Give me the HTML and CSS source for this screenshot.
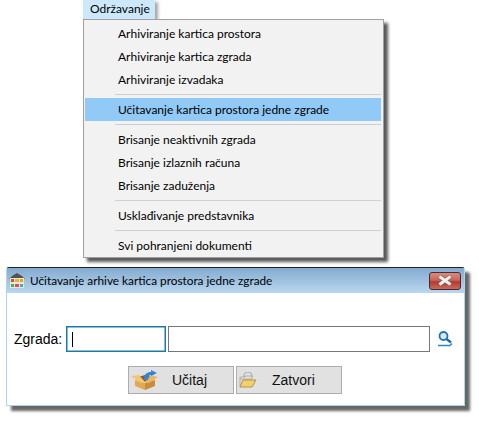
FILE: index.html
```html
<!DOCTYPE html>
<html lang="en">
<head>
    <meta charset="UTF-8">
    <meta name="viewport" content="width=device-width, initial-scale=1.0">
    <title>Učitavanje arhive</title>
    <link rel="stylesheet" href="styles.css">
</head>
<body>
    <!-- Dropdown menu -->
    <div class="menu-wrap">
        <div class="menu-tab">Održavanje</div>
        <div class="menu">
            <div class="item">Arhiviranje kartica prostora</div>
            <div class="item">Arhiviranje kartica zgrada</div>
            <div class="item">Arhiviranje izvadaka</div>
            <div class="sep"></div>
            <div class="item active">Učitavanje kartica prostora jedne zgrade</div>
            <div class="sep"></div>
            <div class="item">Brisanje neaktivnih zgrada</div>
            <div class="item">Brisanje izlaznih računa</div>
            <div class="item">Brisanje zaduženja</div>
            <div class="sep"></div>
            <div class="item">Usklađivanje predstavnika</div>
            <div class="sep"></div>
            <div class="item">Svi pohranjeni dokumenti</div>
        </div>
    </div>

    <!-- Dialog window -->
    <div class="dialog">
        <div class="titlebar">
            <svg class="app-icon" width="16" height="15" viewBox="0 0 16 15">
                <path d="M0 6 L3 3 L8 0 L13 3 L16 6 Z" fill="#55524c"/>
                <rect x="1" y="5" width="14" height="10" fill="#e9e6da"/>
                <rect x="2" y="6" width="3" height="3" fill="#e04a3c"/>
                <rect x="6" y="6" width="4" height="3" fill="#e8b62c"/>
                <rect x="11" y="6" width="3" height="3" fill="#e8a02c"/>
                <rect x="2" y="11" width="3" height="3" fill="#3fb55a"/>
                <rect x="6" y="11" width="4" height="3" fill="#e04a6c"/>
                <rect x="11" y="11" width="3" height="3" fill="#3fb5a0"/>
            </svg>
            <span class="title">Učitavanje arhive kartica prostora jedne zgrade</span>
            <div class="close">
                <svg width="16" height="11" viewBox="0 0 16 11">
                    <path d="M2.5 1.5 L13.5 9.5 M13.5 1.5 L2.5 9.5" stroke="#6b5a58" stroke-width="4.2"/>
                    <path d="M2.5 1.5 L13.5 9.5 M13.5 1.5 L2.5 9.5" stroke="#f4f0ee" stroke-width="3"/>
                </svg>
            </div>
        </div>
        <div class="content">
            <div class="row">
                <label class="field-label">Zgrada:</label>
                <div class="field code"><span class="caret"></span></div>
                <div class="field name"></div>
                <svg class="search" width="15" height="16" viewBox="0 0 15 16">
                    <circle cx="5.5" cy="5" r="4" fill="#d5e9f8" stroke="#2474b5" stroke-width="1.8"/>
                    <path d="M8.5 8 L13 11.5" stroke="#1f6aa8" stroke-width="2.4"/>
                    <path d="M0 14.5 H12 L14 12.5" fill="none" stroke="#2b86c8" stroke-width="1.4"/>
                </svg>
            </div>
            <div class="buttons">
                <button class="btn load">
                    <svg width="28" height="20" viewBox="0 0 28 20">
                        <path d="M4 8 L14 5 L24 8 L14 12 Z" fill="#8a5d20"/>
                        <path d="M4 10 L14 13 V20 L4 16 Z" fill="#e3a94f"/>
                        <path d="M14 13 L24 10 V16 L14 20 Z" fill="#c98d38"/>
                        <path d="M4 9 L0 6 L8 5 L14 12 L10 13 Z" fill="#f1c477"/>
                        <path d="M24 9 L27 7 L20 5 L14 12 L18 13 Z" fill="#eab765"/>
                        <path d="M13 10 C13 4 16 2 20 2 V0 L26 3 L20 6 V5 C18 5 17 7 17 10 Z" fill="#2f86d8"/>
                    </svg>
                    <span>Učitaj</span>
                </button>
                <button class="btn exit">
                    <svg width="18" height="16" viewBox="0 0 18 16">
                        <path d="M5 5 C5 1 7 0 9 0 C11 0 13 1 13 5" fill="none" stroke="#8d99a3" stroke-width="1"/>
                        <path d="M1 15 V5 H6 L7 4 H13 V7 H1" fill="#e6e3d8" stroke="#a39f88" stroke-width="0.7"/>
                        <path d="M1 15 L4 8 H17 L13 15 Z" fill="#f3cf6e" stroke="#a8852f" stroke-width="0.8"/>
                    </svg>
                    <span>Zatvori</span>
                </button>
            </div>
        </div>
    </div>
</body>
</html>
```

FILE: styles.css
```css
html, body {
    height: 100%;
}

body {
    margin: 0;
    padding: 0;
    background-color: white;
    font-family: Lato, "Open Sans", sans-serif;
    color: #000;
}

/* Dropdown menu */
.menu-wrap {
    margin-left: 83px;
    width: 301px;
}

.menu-tab {
    width: 72px;
    height: 19px;
    box-sizing: border-box;
    padding-left: 7px;
    line-height: 18px;
    font-size: 12px;
    background-color: #cce8fb;
    box-shadow: 3px 2px 3px rgba(0, 0, 0, 0.35);
}

.menu {
    position: relative;
    box-sizing: border-box;
    height: 239px;
    padding: 2px 2px 0 1px;
    background-color: #f2f2f2;
    border: 1px solid #a0a0a0;
    box-shadow: 4px 4px 3px rgba(0, 0, 0, 0.65);
}

.item {
    height: 23px;
    line-height: 23px;
    padding-left: 33px;
    font-size: 12px;
}

.item.active {
    background-color: #91c9f7;
}

.sep {
    height: 1px;
    margin: 3px 0 3px 30px;
    background-color: #d0d0d0;
}

/* Dialog window */
.dialog {
    position: relative;
    box-sizing: border-box;
    width: 459px;
    height: 139px;
    margin: 9px 0 0 6px;
    background-color: white;
    border: 1px solid #a6d8ee;
    border-top-color: #222;
    border-radius: 3px 3px 0 0;
    box-shadow: 5px 5px 3px rgba(0, 0, 0, 0.6);
}

.titlebar {
    display: flex;
    align-items: center;
    height: 25px;
    padding: 0 3px 0 2px;
    background: linear-gradient(to bottom, #84abd0, #b9d7ef);
}

.app-icon {
    margin-right: 5px;
}

.title {
    flex-grow: 1;
    font-size: 11.8px;
    white-space: nowrap;
}

.close {
    display: flex;
    justify-content: center;
    align-items: center;
    width: 32px;
    height: 18px;
    box-sizing: border-box;
    border: 1px solid #4c2a2a;
    border-radius: 3px;
    background: linear-gradient(to bottom, #d98a80 0%, #c9655a 45%, #b23a2e 55%, #c96a5c 100%);
}

.content {
    padding: 33px 0 0 8px;
    font-family: "Liberation Sans", Arial, sans-serif;
}

.row {
    display: flex;
    align-items: center;
}

.field-label {
    width: 51px;
    margin-left: -1px;
    margin-right: 1px;
    font-size: 14px;
}

.field {
    display: flex;
    align-items: center;
    box-sizing: border-box;
    height: 26px;
    border: 1px solid #777;
}

.field.code {
    width: 100px;
    margin-right: 2px;
    border: 1px solid #1c7aa8;
    box-shadow: inset 0 0 0 0.5px #1c7aa8;
}

.field.name {
    width: 262px;
}

.caret {
    width: 1px;
    height: 15px;
    margin-left: 5px;
    background-color: black;
}

.search {
    margin-left: 8px;
}

.buttons {
    display: flex;
    gap: 2px;
    margin: 14px 0 0 113px;
}

.btn {
    display: flex;
    align-items: center;
    width: 106px;
    height: 28px;
    padding: 0;
    font-family: inherit;
    font-size: 14px;
    color: #111;
    background-color: #e1e1e1;
    border: 1px solid #adadad;
}

.btn.load svg {
    margin-left: 2px;
    margin-right: 13px;
}

.btn.exit svg {
    margin-left: 2px;
    margin-right: 15px;
}
```
